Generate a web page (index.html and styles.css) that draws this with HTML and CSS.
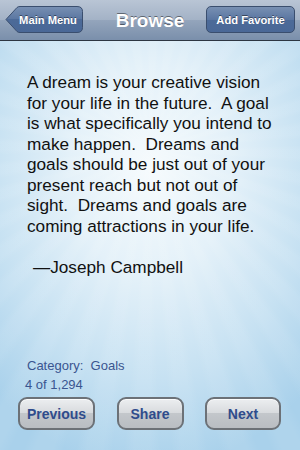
FILE: index.html
```html
<!DOCTYPE html>
<html>
<head>
<meta charset="utf-8">
<link rel="stylesheet" href="styles.css">
</head>
<body>
<div class="screen">
  <header class="navbar">
    <button class="nav-btn back-btn">
      <svg class="back-shape" width="78" height="27" viewBox="0 0 78 27">
        <defs>
          <linearGradient id="bg1" x1="0" y1="0" x2="0" y2="1">
            <stop offset="0" stop-color="#7890b3"/>
            <stop offset="0.5" stop-color="#5a76a1"/>
            <stop offset="0.5" stop-color="#4c6a98"/>
            <stop offset="1" stop-color="#4a6897"/>
          </linearGradient>
        </defs>
        <path d="M1 13.5 L12 1.5 Q13 0.5 15 0.5 L72 0.5 Q77.5 0.5 77.5 5.5 L77.5 21.5 Q77.5 26.5 72 26.5 L15 26.5 Q13 26.5 12 25.5 Z" fill="url(#bg1)" stroke="#3a4e6e" stroke-width="1"/>
      </svg>
      <span class="nav-label">Main Menu</span>
    </button>
    <h1 class="title">Browse</h1>
    <button class="nav-btn fav-btn"><span class="nav-label">Add Favorite</span></button>
  </header>
  <main class="content">
    <p class="quote">A dream is your creative vision for your life in the future.&nbsp; A goal is what specifically you intend to make happen.&nbsp; Dreams and goals should be just out of your present reach but not out of sight.&nbsp; Dreams and goals are coming attractions in your life.</p>
    <p class="author">—Joseph Campbell</p>
  </main>
  <footer class="footer">
    <div class="meta">Category:&nbsp; Goals</div>
    <div class="meta count">4 of 1,294</div>
    <div class="actions">
      <button class="act-btn prev">Previous</button>
      <button class="act-btn share">Share</button>
      <button class="act-btn next">Next</button>
    </div>
  </footer>
</div>
</body>
</html>
```

FILE: styles.css
```css
* { box-sizing: border-box; }
html, body { margin: 0; padding: 0; }
body {
  width: 300px;
  height: 450px;
  overflow: hidden;
  font-family: "Liberation Sans", Arial, sans-serif;
}
.screen {
  width: 300px;
  height: 450px;
  display: flex;
  flex-direction: column;
  background:
    repeating-conic-gradient(from 0deg at 150px 150px, rgba(255,255,255,0.07) 0deg 3deg, rgba(255,255,255,0) 5deg 7deg, rgba(255,255,255,0.07) 9deg),
    radial-gradient(ellipse 230px 300px at 150px 170px, #f6fbfd 0%, #e4f1f9 35%, #c6e1f2 70%, #a9d1eb 100%);
}
.navbar {
  height: 41px;
  flex: none;
  display: flex;
  align-items: center;
  justify-content: space-between;
  padding: 0 5px 1px 5px;
  background: linear-gradient(#b9c5d5 0%, #a3b2c6 50%, #94a5bc 50%, #7a8fab 100%);
  border-bottom: 1px solid #2d3642;
  position: relative;
}
.nav-btn {
  height: 27px;
  padding: 0;
  border: none;
  background: none;
  font-family: "Liberation Sans", Arial, sans-serif;
  font-weight: bold;
  font-size: 11.2px;
  color: #fff;
  text-shadow: 0 -1px 0 rgba(0,0,0,0.45);
  display: flex;
  align-items: center;
  justify-content: center;
}
.back-btn {
  width: 78px;
  position: relative;
  padding-left: 8px;
}
.back-shape {
  position: absolute;
  left: 0;
  top: 0;
}
.nav-label { position: relative; }
.fav-btn {
  width: 89px;
  border: 1px solid #3a4e6e;
  border-radius: 5px;
  background: linear-gradient(#7890b3 0%, #5a76a1 50%, #4c6a98 50%, #4a6897 100%);
}
.title {
  margin: 0;
  font-size: 19px;
  font-weight: bold;
  color: #fff;
  text-shadow: 0 -1px 0 rgba(0,0,0,0.45);
  position: absolute;
  left: 0;
  right: 0;
  top: 10px;
  text-align: center;
  pointer-events: none;
}
.content {
  flex: 1;
  padding: 31px 22px 0 27px;
}
.quote {
  margin: 0;
  font-size: 17.2px;
  line-height: 20.5px;
  color: #111;
}
.author {
  margin: 20.5px 0 0 0;
  padding-left: 6px;
  font-size: 17.2px;
  line-height: 20.5px;
  color: #111;
}
.footer {
  flex: none;
  padding: 0 0 20px 0;
}
.meta {
  padding-left: 27px;
  font-size: 13px;
  line-height: 19px;
  color: #3a5590;
}
.meta.count { padding-left: 25px; }
.actions {
  display: flex;
  justify-content: space-between;
  padding: 3px 19px 0 18px;
}
.act-btn {
  height: 33px;
  border: 2px solid #6c7177;
  border-radius: 9px;
  background: linear-gradient(#eceef0 0%, #d7dadd 50%, #c3c7cb 50%, #b9bdc2 100%);
  box-shadow: inset 0 1px 0 rgba(255,255,255,0.8);
  font-family: "Liberation Sans", Arial, sans-serif;
  font-weight: bold;
  font-size: 14px;
  color: #2f4c8c;
  padding: 0;
}
.prev { width: 77px; }
.share { width: 67px; }
.next { width: 76px; }
```
